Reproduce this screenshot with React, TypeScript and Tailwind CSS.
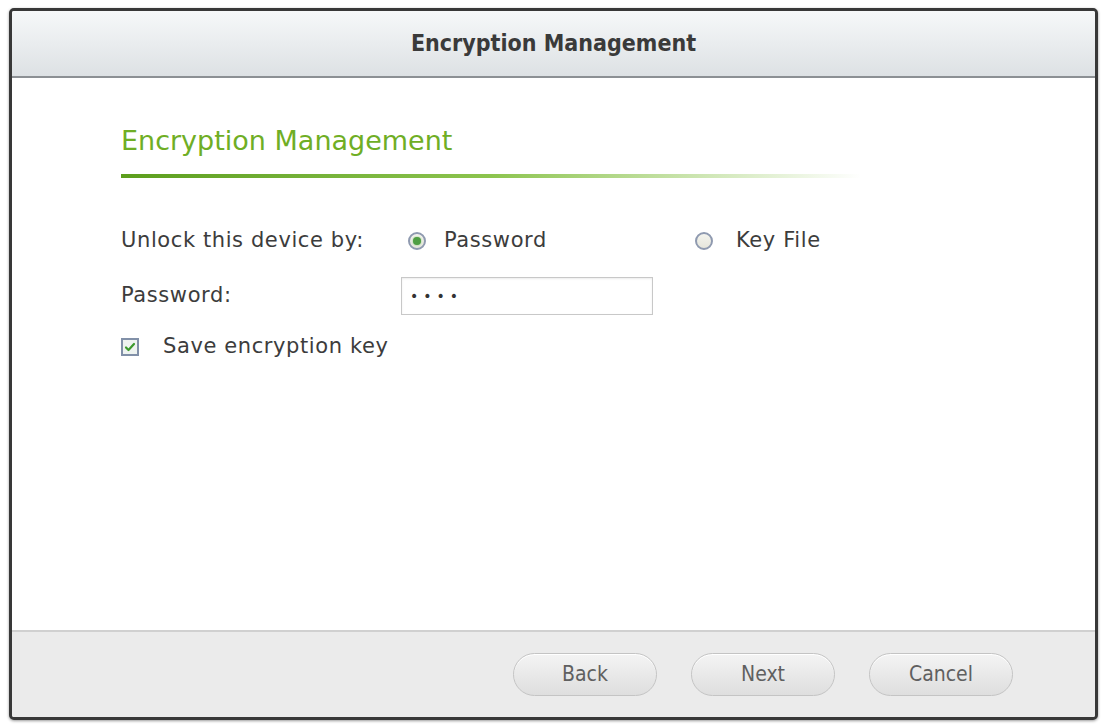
import React from "react";

const body = { fontFamily: '"DejaVu Sans", Verdana, sans-serif' };
const cond = { fontFamily: '"DejaVu Sans Condensed", "DejaVu Sans", sans-serif' };

function Radio({ checked }: { checked?: boolean }) {
  return (
    <span className="flex h-[18px] w-[18px] items-center justify-center rounded-full border-2 border-[#8f9ab0] bg-gradient-to-b from-[#f4f4ee] to-[#e6e6dc]">
      {checked && <span className="h-[8px] w-[8px] rounded-full bg-[#4f9e43] shadow-[0_0_2px_#7cc46f]" />}
    </span>
  );
}

function Checkbox() {
  return (
    <span className="flex h-[18px] w-[18px] items-center justify-center border-2 border-[#8190a8] bg-[#eef3f0]">
      <svg width="12" height="12" viewBox="0 0 12 12" fill="none" stroke="#3c9a2c" strokeWidth="2.2" strokeLinecap="round" strokeLinejoin="round">
        <path d="M2 6.5l2.5 2.5L10 3" />
      </svg>
    </span>
  );
}

function Button({ label }: { label: string }) {
  return (
    <button
      className="flex h-[43px] w-[144px] items-center justify-center rounded-full border border-[#c4c4c4] bg-gradient-to-b from-[#f4f4f4] to-[#dedede] text-[21px] text-[#606060] shadow-[inset_0_1px_0_#ffffff]"
      style={cond}
    >
      {label}
    </button>
  );
}

export default function App() {
  return (
    <div className="h-[726px] w-[1104px] bg-white pl-[9px] pt-[8px]">
      <div className="flex h-[712px] w-[1089px] flex-col overflow-hidden rounded-[5px] border-[3px] border-[#383838] bg-white shadow-[0_1px_3px_rgba(0,0,0,0.4)]">
        {/* header */}
        <div className="flex h-[67px] items-center justify-center border-b-2 border-[#8c9094] bg-gradient-to-b from-[#f6f8f9] to-[#dde1e4]">
          <span className="text-[23px] font-bold text-[#3a3a3a]" style={cond}>
            Encryption Management
          </span>
        </div>

        {/* content */}
        <div className="flex-1 pl-[109px] pt-[47px] text-[21px] tracking-[0.6px] text-[#3c3c3c]" style={body}>
          <div className="text-[27px] leading-[32px] tracking-normal text-[#6fae25]">Encryption Management</div>
          <div className="mt-[17px] h-[4px] w-[740px] bg-gradient-to-r from-[#5c9e1c] via-[#8cc44e] to-transparent" />

          <div className="mt-[50px] flex h-[26px] items-center">
            <span className="w-[287px]">Unlock this device by:</span>
            <Radio checked />
            <span className="ml-[18px] w-[251px]">Password</span>
            <Radio />
            <span className="ml-[23px]">Key File</span>
          </div>

          <div className="mt-[23px] flex items-center">
            <span className="w-[280px]">Password:</span>
            <div className="flex h-[38px] w-[252px] items-center border border-[#c8c8c8] pl-[8px] text-[14px] tracking-[5px] text-[#333] shadow-[inset_0_1px_2px_rgba(0,0,0,0.08)]">
              ••••
            </div>
          </div>

          <div className="mt-[19px] flex h-[26px] items-center">
            <Checkbox />
            <span className="ml-[24px]">Save encryption key</span>
          </div>
        </div>

        {/* footer */}
        <div className="flex h-[87px] items-center justify-end gap-[34px] border-t-2 border-[#d0d0d0] bg-[#ebebeb] pr-[82px]">
          <Button label="Back" />
          <Button label="Next" />
          <Button label="Cancel" />
        </div>
      </div>
    </div>
  );
}
